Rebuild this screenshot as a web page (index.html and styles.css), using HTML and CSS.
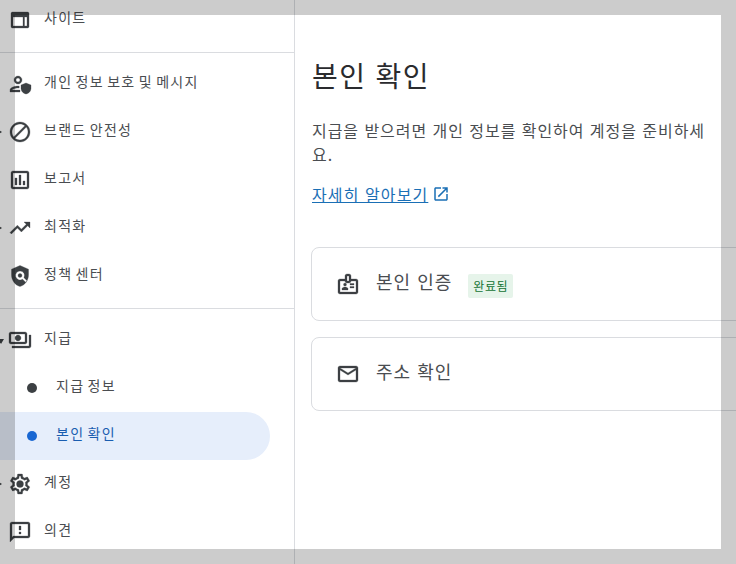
FILE: index.html
```html
<!DOCTYPE html>
<html lang="ko">
<head>
<meta charset="utf-8">
<title>본인 확인</title>
<link rel="stylesheet" href="styles.css">
</head>
<body>
<div class="layout">
  <nav class="sidebar">
    <div class="nav-item"><svg class="icon" viewBox="0 0 24 24"><path d="M19.500 4h-15C3.600 4 3 4.700 3 5.500v13c0 .8.600 1.500 1.500 1.500h15c.9 0 1.500-.7 1.500-1.500v-13c0-.8-.6-1.500-1.500-1.500zM15 18H5V9h10v9zm4 0h-2.500V9H19v9z"/></svg><span>사이트</span></div>
    <div class="divider"></div>
    <div class="nav-item"><svg class="icon" viewBox="0 0 24 24"><path d="M10 12c2.200 0 4-1.800 4-4s-1.800-4-4-4-4 1.800-4 4 1.800 4 4 4zm0-6c1.100 0 2 .9 2 2s-.9 2-2 2-2-.9-2-2 .9-2 2-2zM4 18c.2-.7 3.300-2 6-2 .4 0 .8 0 1.200.1V14.100c-.4 0-.8-.1-1.200-.1-2.700 0-8 1.300-8 4v2h10v-2H4z"/><path d="M18 11l-5 2v3.200c0 2.900 2.100 5.300 5 5.800 2.900-.5 5-2.900 5-5.800V13l-5-2z"/></svg><span>개인 정보 보호 및 메시지</span></div>
    <div class="nav-item has-arrow"><i class="arrow"></i><svg class="icon" viewBox="0 0 24 24"><path d="M12 2C6.480 2 2 6.480 2 12s4.480 10 10 10 10-4.480 10-10S17.520 2 12 2zM4 12c0-4.420 3.580-8 8-8 1.850 0 3.550.63 4.900 1.690L5.690 16.900C4.630 15.550 4 13.850 4 12zm8 8c-1.850 0-3.550-.63-4.900-1.690L18.310 7.100C19.370 8.450 20 10.150 20 12c0 4.420-3.580 8-8 8z"/></svg><span>브랜드 안전성</span></div>
    <div class="nav-item"><svg class="icon" viewBox="0 0 24 24"><path d="M19 3H5c-1.100 0-2 .9-2 2v14c0 1.100.9 2 2 2h14c1.100 0 2-.9 2-2V5c0-1.100-.9-2-2-2zm0 16H5V5h14v14zM7 10h2v7H7zm4-3h2v10h-2zm4 6h2v4h-2z"/></svg><span>보고서</span></div>
    <div class="nav-item has-arrow"><i class="arrow"></i><svg class="icon" viewBox="0 0 24 24"><path d="M16 6l2.290 2.290-4.880 4.880-4-4L2 16.590 3.410 18l6-6 4 4 6.300-6.290L22 12V6z"/></svg><span>최적화</span></div>
    <div class="nav-item"><svg class="icon" viewBox="0 0 24 24"><path fill-rule="evenodd" d="M12 1.500 3.500 5.200V11c0 5.300 3.600 10.200 8.500 11.500 4.900-1.300 8.500-6.200 8.500-11.500V5.200L12 1.500zM12 7a4.500 4.500 0 1 0 2.600 8.200l3 3 1.400-1.500-3-3A4.500 4.500 0 0 0 12 7zm0 2.500a2 2 0 1 1 0 4 2 2 0 0 1 0-4z"/></svg><span>정책 센터</span></div>
    <div class="divider"></div>
    <div class="nav-item has-arrow"><i class="arrow arrow-open"></i><svg class="icon" viewBox="0 0 24 24"><path d="M19 14V6c0-1.100-.9-2-2-2H3c-1.100 0-2 .9-2 2v8c0 1.100.9 2 2 2h14c1.100 0 2-.9 2-2zm-2 0H3V6h14v8zm-7-7c-1.660 0-3 1.340-3 3s1.340 3 3 3 3-1.340 3-3-1.340-3-3-3zm13 0v11c0 1.100-.9 2-2 2H4v-2h17V7h2z"/></svg><span>지급</span></div>
    <div class="nav-sub"><i class="dot"></i><span>지급 정보</span></div>
    <div class="nav-sub active"><i class="dot"></i><span>본인 확인</span></div>
    <div class="nav-item has-arrow"><i class="arrow"></i><svg class="icon" viewBox="0 0 24 24"><path d="M19.430 12.980c.04-.32.07-.64.07-.98 0-.34-.03-.66-.07-.98l2.110-1.650c.19-.15.24-.42.12-.64l-2-3.460c-.09-.16-.26-.25-.44-.25-.06 0-.12.01-.17.03l-2.490 1c-.52-.4-1.080-.73-1.690-.98l-.38-2.650C14.460 2.180 14.250 2 14 2h-4c-.25 0-.46.18-.49.42l-.38 2.650c-.61.25-1.170.59-1.690.98l-2.490-1c-.06-.02-.12-.03-.18-.03-.17 0-.34.09-.43.25l-2 3.460c-.13.22-.07.49.12.64l2.110 1.650c-.04.32-.07.65-.07.98 0 .33.03.66.07.98l-2.110 1.650c-.19.15-.24.42-.12.64l2 3.460c.09.16.26.25.44.25.06 0 .12-.01.17-.03l2.490-1c.52.4 1.080.73 1.690.98l.38 2.650c.03.24.24.42.49.42h4c.25 0 .46-.18.49-.42l.38-2.650c.61-.25 1.170-.59 1.690-.98l2.490 1c.06.02.12.03.18.03.17 0 .34-.09.43-.25l2-3.460c.12-.22.07-.49-.12-.64l-2.110-1.650zm-1.980-1.710c.04.31.05.52.05.73 0 .21-.02.43-.05.73l-.14 1.130.89.7 1.080.84-.7 1.210-1.270-.51-1.040-.42-.9.68c-.43.32-.84.56-1.250.73l-1.060.43-.16 1.130-.2 1.350h-1.400l-.19-1.350-.16-1.130-1.060-.43c-.43-.18-.83-.41-1.230-.71l-.91-.7-1.060.43-1.270.51-.7-1.210 1.080-.84.89-.7-.14-1.130c-.03-.31-.05-.54-.05-.74s.02-.43.05-.73l.14-1.130-.89-.7-1.080-.84.7-1.210 1.270.51 1.040.42.9-.68c.43-.32.84-.56 1.250-.73l1.060-.43.16-1.130.2-1.350h1.390l.19 1.350.16 1.130 1.060.43c.43.18.83.41 1.230.71l.91.7 1.060-.43 1.270-.51.7 1.210-1.070.85-.89.7.14 1.130z"/><circle cx="12" cy="12" r="3.500"/></svg><span>계정</span></div>
    <div class="nav-item"><svg class="icon" viewBox="0 0 24 24"><path d="M20 2H4c-1.100 0-1.990.9-1.990 2L2 22l4-4h14c1.100 0 2-.9 2-2V4c0-1.100-.9-2-2-2zm0 14H5.170L4 17.170V4h16v12zM11 12h2v2h-2zm0-6h2v4h-2z"/></svg><span>의견</span></div>
  </nav>
  <main class="content">
    <h1 class="title">본인 확인</h1>
    <p class="intro">지급을 받으려면 개인 정보를 확인하여 계정을 준비하세요.</p>
    <div class="learn-row">
      <a class="learn" href="#">자세히 알아보기</a>
      <svg class="learn-icon" viewBox="0 0 24 24"><path d="M19 19H5V5h7V3H5c-1.110 0-2 .9-2 2v14c0 1.100.89 2 2 2h14c1.100 0 2-.9 2-2v-7h-2v7zM14 3v2h3.590l-9.830 9.830 1.410 1.410L19 6.410V10h2V3h-7z"/></svg>
    </div>
    <div class="cards">
      <section class="card">
        <svg class="icon" viewBox="0 0 24 24"><path d="M20 7h-5V4c0-1.100-.9-2-2-2h-2c-1.100 0-2 .9-2 2v3H4c-1.100 0-2 .9-2 2v11c0 1.100.9 2 2 2h16c1.100 0 2-.9 2-2V9c0-1.100-.9-2-2-2zM11 4h2v5h-2V4zm9 16H4V9h5c0 1.100.9 2 2 2h2c1.100 0 2-.9 2-2h5v11zm-11-6a1.500 1.500 0 1 0 0-3 1.500 1.500 0 0 0 0 3zm3 2.500c0-.9-2-1.500-3-1.500s-3 .6-3 1.500V18h6v-1.500zM14 13h4v-1.500h-4V13zm0 3h4v-1.500h-4V16z"/></svg>
        <span class="card-title">본인 인증</span>
        <span class="badge">완료됨</span>
      </section>
      <section class="card">
        <svg class="icon" viewBox="0 0 24 24"><path d="M20 4H4c-1.100 0-1.990.9-1.990 2L2 18c0 1.100.9 2 2 2h16c1.100 0 2-.9 2-2V6c0-1.100-.9-2-2-2zm0 14H4V8l8 5 8-5v10zm-8-7L4 6h16l-8 5z"/></svg>
        <span class="card-title">주소 확인</span>
      </section>
    </div>
  </main>
</div>
<div class="spotlight"></div>
</body>
</html>
```
FILE: styles.css
```css
* { box-sizing: border-box; }
html, body { margin: 0; height: 100%; overflow: hidden; background: #fff; }
body { font-family: "Noto Sans CJK KR", "Noto Sans", sans-serif; color: #4a4d51; }
.layout { display: flex; height: 564px; overflow: hidden; }
.sidebar { flex: 0 0 295px; height: 568px; margin-top: -4px; border-right: 1px solid #dadce0; }
.nav-item, .nav-sub { position: relative; display: flex; align-items: center; height: 48px; font-size: 14px; letter-spacing: 1.3px; word-spacing: -2px; }
.nav-item { padding-left: 8px; gap: 12px; }
.nav-item span, .nav-sub span { position: relative; top: -3px; }
.icon { width: 24px; height: 24px; fill: #3c4043; stroke: #3c4043; stroke-width: .3; flex: none; }
.arrow { position: absolute; left: -3px; top: 21px; border-left: 5px solid #3c4043; border-top: 3px solid transparent; border-bottom: 3px solid transparent; }
.arrow-open { left: -2px; top: 23px; border-left: 3px solid transparent; border-right: 3px solid transparent; border-top: 5px solid #3c4043; border-bottom: 0; }
.divider { height: 1px; background: #dadce0; margin: 8px 0 7px; }
.nav-sub { width: 270px; padding-left: 27px; gap: 19px; border-radius: 0 24px 24px 0; }
.dot { width: 10px; height: 10px; border-radius: 50%; background: #3c4043; flex: none; }
.nav-sub.active { background: #e6eefb; color: #1a5db0; }
.nav-sub.active .dot { background: #1967d2; }
.content { flex: 1; min-width: 0; padding: 55px 0 0 17px; overflow: hidden; }
.title { margin: 0; font-size: 28px; font-weight: 400; line-height: 40px; color: #2a2b2e; letter-spacing: 1.4px; }
.intro { width: 400px; margin: 23px 0 0; font-size: 16px; line-height: 24px; letter-spacing: .95px; }
.learn-row { display: flex; align-items: center; gap: 4px; margin-top: 16px; }
.learn { font-size: 16px; line-height: 24px; letter-spacing: 1.1px; color: #1a6fb5; text-decoration: underline; }
.learn-icon { width: 18px; height: 18px; fill: #1a6fb5; flex: none; }
.cards { display: flex; flex-direction: column; gap: 16px; width: 600px; margin-top: 41px; margin-left: -1px; }
.card { display: flex; align-items: center; height: 74px; padding-left: 24px; border: 1px solid #dadce0; border-radius: 8px; }
.card-title { margin-left: 16px; font-size: 18px; letter-spacing: 1px; color: #4a4d51; position: relative; top: -3px; }
.badge { margin: 4px 0 0 16px; padding: 0 5px; height: 24px; line-height: 24px; border-radius: 2px; background: #e6f4ea; color: #137333; font-size: 12px; letter-spacing: .6px; }
.spotlight { position: absolute; left: 15px; top: 15px; width: 706px; height: 534px; box-shadow: 0 0 0 1000px rgba(0, 0, 0, .2); pointer-events: none; }
```
